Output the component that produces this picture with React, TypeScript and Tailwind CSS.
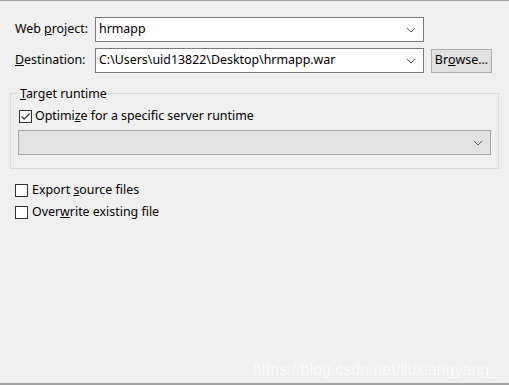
import React from "react";

const font = { fontFamily: '"Noto Sans", "Liberation Sans", sans-serif' };

function Chevron({ color = "#606060" }: { color?: string }) {
  return (
    <svg width="10" height="6" viewBox="0 0 10 6" className="shrink-0">
      <path d="M1 1 L5 5 L9 1" fill="none" stroke={color} strokeWidth="1" />
    </svg>
  );
}

function Combo({ value, disabled }: { value?: string; disabled?: boolean }) {
  return (
    <div
      className={
        disabled
          ? "flex h-[25px] items-center justify-between border border-[#a3a9b0] bg-[#e3e3e3] pl-[3px] pr-[7px]"
          : "flex h-[25px] items-center justify-between border border-[#7a7a7a] bg-white pl-[3px] pr-[7px]"
      }
    >
      <span className="leading-none text-black">{value}</span>
      <Chevron />
    </div>
  );
}

function Check({ checked }: { checked?: boolean }) {
  return (
    <div className="flex h-[13px] w-[13px] shrink-0 items-center justify-center border border-[#333] bg-white">
      {checked && (
        <svg width="11" height="11" viewBox="0 0 11 11">
          <path d="M1.5 5.5 L4.2 8.2 L9.5 2.5" fill="none" stroke="#333" strokeWidth="1.2" />
        </svg>
      )}
    </div>
  );
}

export default function App() {
  return (
    <div
      className="relative flex h-[385px] w-[509px] flex-col bg-[#f0f0f0] text-[12.4px] text-black"
      style={font}
    >
      <div className="h-px bg-[#a0a0a0]" />
      <div className="flex flex-1 flex-col px-[10px] pt-[16px]">
        <div className="flex items-center pl-[5px]">
          <div className="w-[80px]">
            Web <span className="underline">p</span>roject:
          </div>
          <div className="w-[329px]">
            <Combo value="hrmapp" />
          </div>
        </div>
        <div className="mt-[6px] flex items-center pl-[5px]">
          <div className="w-[80px]">
            <span className="underline">D</span>estination:
          </div>
          <div className="w-[329px]">
            <Combo value="C:\Users\uid13822\Desktop\hrmapp.war" />
          </div>
          <button className="ml-[7px] flex h-[24px] w-[61px] items-center justify-center border border-[#adadad] bg-[#e1e1e1]">
            Br<span className="underline">o</span>wse...
          </button>
        </div>
        <fieldset className="mt-[13px] w-[489px] border border-[#dcdcdc] px-[7px] pb-[13px]">
          <legend className="ml-[1px] px-[1px] leading-[15px]">
            <span className="underline">T</span>arget runtime
          </legend>
          <div className="mt-[8px] flex h-[15px] items-center gap-[3px] pl-[1px]">
            <Check checked />
            <span>
              Optimi<span className="underline">z</span>e for a specific server runtime
            </span>
          </div>
          <div className="mt-[6px]">
            <Combo disabled />
          </div>
        </fieldset>
        <div className="mt-[14px] flex h-[14px] items-center gap-[4px] pl-[5px]">
          <Check />
          <span>
            Export <span className="underline">s</span>ource files
          </span>
        </div>
        <div className="mt-[8px] flex h-[14px] items-center gap-[4px] pl-[5px]">
          <Check />
          <span>
            Over<span className="underline">w</span>rite existing file
          </span>
        </div>
        <div className="flex flex-1 items-end justify-end pb-[1px] pr-[1px]">
          <span
            className="text-[16px] text-[#fbfbfb] [text-shadow:0_0_1px_#e2e2e2]"
            style={{ fontFamily: '"Liberation Sans", Arial, sans-serif' }}
          >
            https://blog.csdn.net/liuxiangyang_
          </span>
        </div>
      </div>
      <div className="h-[2px] bg-[#a0a0a0]" />
    </div>
  );
}
